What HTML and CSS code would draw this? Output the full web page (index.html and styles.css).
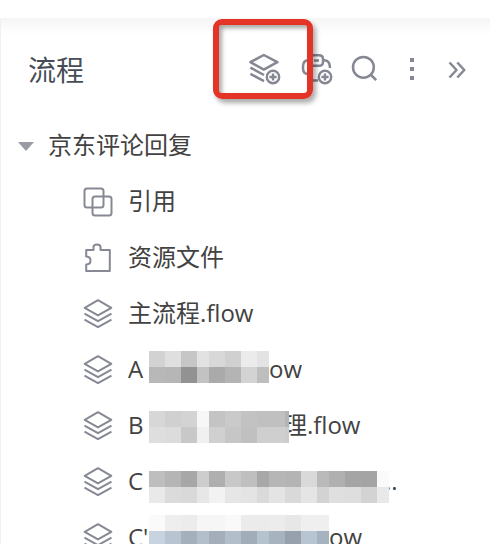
FILE: index.html
```html
<!DOCTYPE html>
<html lang="zh-CN">
<head>
<meta charset="utf-8">
<title>流程</title>
<link rel="stylesheet" href="styles.css">
</head>
<body>
<svg width="0" height="0" class="defs">
  <symbol id="layers" viewBox="0 0 30 30"><path d="M15 1.2 28.3 8.8 15 16.4 1.7 8.8ZM1.5 14.6 15 22.2 28.5 14.6M1.5 20.6 15 28.2 28.5 20.6"/></symbol>
</svg>
<main class="panel">
  <header class="header">
    <h1 class="title">流程</h1>
    <div class="tools">
      <svg class="icon tool-layers" width="32" height="32" viewBox="0 0 32 32"><path d="M14.8 2 28.4 9.2 14.8 16.6 1.4 9.2ZM1.4 14.6 15 22M1.4 20.8 15 28.2"/><circle class="badge" cx="24" cy="24" r="6.2"/><path class="plus" d="M24 20.4v7.2M20.4 24h7.2"/></svg>
      <svg class="icon tool-python" width="32" height="32" viewBox="0 0 32 32"><path d="M8.5 12.5V6Q8.5 2.2 12.5 2.2H18Q22 2.2 22 6V9Q22 12.8 18 12.8H12Q8.5 12.8 8.5 17V23Q8.5 27.5 13 27.5H17M8.5 7.2H7Q2 7.5 2 13.5V15.5Q2 21.3 8.5 21.3M22 7.2H23.5Q29 7.5 29 15M13 7.6H18"/><circle class="badge" cx="24" cy="24" r="6.2"/><path class="plus" d="M24 20.4v7.2M20.4 24h7.2"/></svg>
      <svg class="icon tool-search" width="28" height="28" viewBox="0 0 28 28"><circle cx="12.4" cy="12.3" r="10.4"/><path d="m20 20 5.2 5.2"/></svg>
      <svg class="icon tool-more" width="6" height="24" viewBox="0 0 6 24"><path class="dots" d="M1 1h4v4H1zM1 10h4v4H1zM1 19h4v4H1z"/></svg>
      <svg class="icon tool-collapse" width="18" height="18" viewBox="0 0 18 18"><path d="m1.5 1.5 7 7.5-7 7.5M9.3 1.5l7 7.5-7 7.5"/></svg>
    </div>
  </header>
  <ul class="tree">
    <li class="row root"><svg class="caret" width="16" height="9" viewBox="0 0 16 9"><path d="M0 0h16L8 9z"/></svg><span>京东评论回复</span></li>
    <li class="row"><svg class="icon" width="30" height="30" viewBox="0 0 30 30"><rect x="1.5" y="1.5" width="19" height="19" rx="2.5"/><rect x="9.5" y="9.5" width="19" height="19" rx="2.5"/></svg><span>引用</span></li>
    <li class="row"><svg class="icon" width="30" height="30" viewBox="0 0 30 30"><path d="M3.2 7H10.5V4Q10.5 1.5 14 1.5T17.5 4V7H26.8V28H3.2V21.5Q7.5 21.3 7.5 17.5T3.2 13.5Z"/></svg><span>资源文件</span></li>
    <li class="row"><svg class="icon" width="30" height="30"><use href="#layers"/></svg><span>主流程.flow</span></li>
    <li class="row"><svg class="icon" width="30" height="30"><use href="#layers"/></svg><span class="prefix">A</span><svg class="mosaic" data-rows="d2d2d2 dfdfdf c6c6c6 e2e2e2 d8d8d8 d0d0d0 ebebeb e3e3e3|b8b8b8 b6b6b6 929292 c2c2c2 aaaaaa b4b4b4 d3d3d3 bebebe"></svg><span>ow</span></li>
    <li class="row"><svg class="icon" width="30" height="30"><use href="#layers"/></svg><span class="prefix">B</span><svg class="mosaic" data-extra="4" data-rows="d7d7d7 d0d0d0 d3d3d3 f7f7f7 c4c4c4 cacaca c2c2c2 c0c0c0 c0c0c0 b4b4b4|dedede dcdcdc c8c8c8 f0f0f0 d0d0d0 c6c6c6 c0c0c0 cfcfcf cfcfcf cccccc"></svg><span class="suffix">理.flow</span></li>
    <li class="row"><svg class="icon" width="30" height="30"><use href="#layers"/></svg><span class="prefix">C</span><svg class="mosaic" data-rows="bebebe b5b5b5 a7a7a7 cdcdcd afafaf c8c8c8 bfbfbf a8a8a8 b6b6b6 b4b4b4 d9d9d9 bababa b0b0b0 a5a5a5 a4a4a4 fafafa|e9e9e9 dbdbdb d9d9d9 e7e7e7 f2f2f2 e6e6e6 e4e4e4 dadada e4e4e4 d9d9d9 e5e5e5 d3d3d3 dfdfdf dedede d3d3d3 e9e9e9"></svg><span class="suffix dots-end">..</span></li>
    <li class="row"><svg class="icon" width="30" height="30"><use href="#layers"/></svg><span class="prefix">C'</span><svg class="mosaic low" data-rows="fafafa eeeeee ececec f6f6f6 f6f6f6 f9f9f9 ebebeb ebebeb ececec e7e7e7 efefef efefef|c8d3e0 b8c4d2 a4b0bc b3c0cc a3aeba b2bfcb a1adb8 b5c3cf a7b4c0 96a1ad b7c4d1 a5b2c0"></svg><span>ow</span></li>
  </ul>
  <div class="highlight"></div>
</main>
<script src="mosaic.js"></script>
</body>
</html>
```
FILE: styles.css
```css
* { box-sizing: border-box; }
body {
  margin: 0;
  padding-top: 18px;
  height: 544px;
  overflow: hidden;
  background: #fff;
  color: #424242;
  font: 24px/54px "Open Sans", "Noto Sans CJK SC", sans-serif;
}
.defs { position: absolute; }
.panel {
  height: 526px;
  overflow: hidden;
  border-left: 1px solid #f0f0f0;
  background: linear-gradient(#f5f5f5, #fff 17px);
}
.header {
  display: flex;
  height: 100px;
  padding-left: 27px;
}
.title {
  width: 221px;
  margin: 0;
  font: 400 28px/102px "Noto Sans CJK SC", sans-serif;
  color: #474d57;
}
.tools { display: flex; align-items: flex-start; }
.icon {
  flex: none;
  display: block;
  fill: none;
  stroke: #868993;
  stroke-width: 2;
  stroke-linejoin: round;
}
.tools .icon { stroke: #858792; stroke-width: 2.5; }
.tools .badge { fill: #fff; stroke-width: 2.4; }
.tools .plus { stroke-width: 2.4; }
.tools .dots { fill: #858792; stroke: none; }
.tool-layers { margin-top: 35px; }
.tool-python { margin: 35px 0 0 20px; }
.tool-search { margin: 37px 0 0 18px; }
.tool-more { margin: 39px 0 0 30px; }
.tool-collapse { margin: 43px 0 0 33px; }
.tree { margin: 0; padding: 0; list-style: none; }
.row {
  display: flex;
  align-items: center;
  height: 56px;
  padding-left: 82px;
  white-space: nowrap;
}
.row > span { padding-bottom: 2px; }
.row > .icon { margin-right: 15px; }
.root { padding-left: 17px; }
.caret { margin-right: 14px; fill: #9a9ca3; }
.row > .prefix { width: 21px; }
.mosaic {
  position: relative;
  z-index: 1;
  top: -3px;
  flex: none;
  display: block;
  height: 32px;
  shape-rendering: crispEdges;
}
.row:nth-child(6) .mosaic { top: 1px; }
.row:nth-child(7) .mosaic { top: 5px; }
.row .mosaic.low { top: -7px; }
.suffix { margin-left: -6px; }
.dots-end { margin-left: -4px; }
.highlight {
  position: absolute;
  left: 213px;
  top: 19px;
  width: 100px;
  height: 80px;
  border: 6px solid #e43427;
  border-radius: 9px;
  box-shadow: 3px 4px 5px #0005, inset 3px 3px 4px #0005;
}
```
FILE: mosaic.js
```js
// Cell widths repeat as 16, 16, 16, 12; data-extra narrows the last cell.
document.querySelectorAll(".mosaic").forEach(function (svg) {
  var width = 0;
  svg.dataset.rows.split("|").forEach(function (row, r) {
    var x = 0;
    row.split(" ").forEach(function (color, i, all) {
      var w = i % 4 === 3 ? 12 : 16;
      if (svg.dataset.extra && i === all.length - 1) w = +svg.dataset.extra;
      var cell = document.createElementNS("http://www.w3.org/2000/svg", "rect");
      cell.setAttribute("x", x);
      cell.setAttribute("y", r * 16);
      cell.setAttribute("width", w);
      cell.setAttribute("height", 16);
      cell.setAttribute("fill", "#" + color);
      svg.appendChild(cell);
      x += w;
    });
    width = x;
  });
  svg.setAttribute("width", width);
});
```
